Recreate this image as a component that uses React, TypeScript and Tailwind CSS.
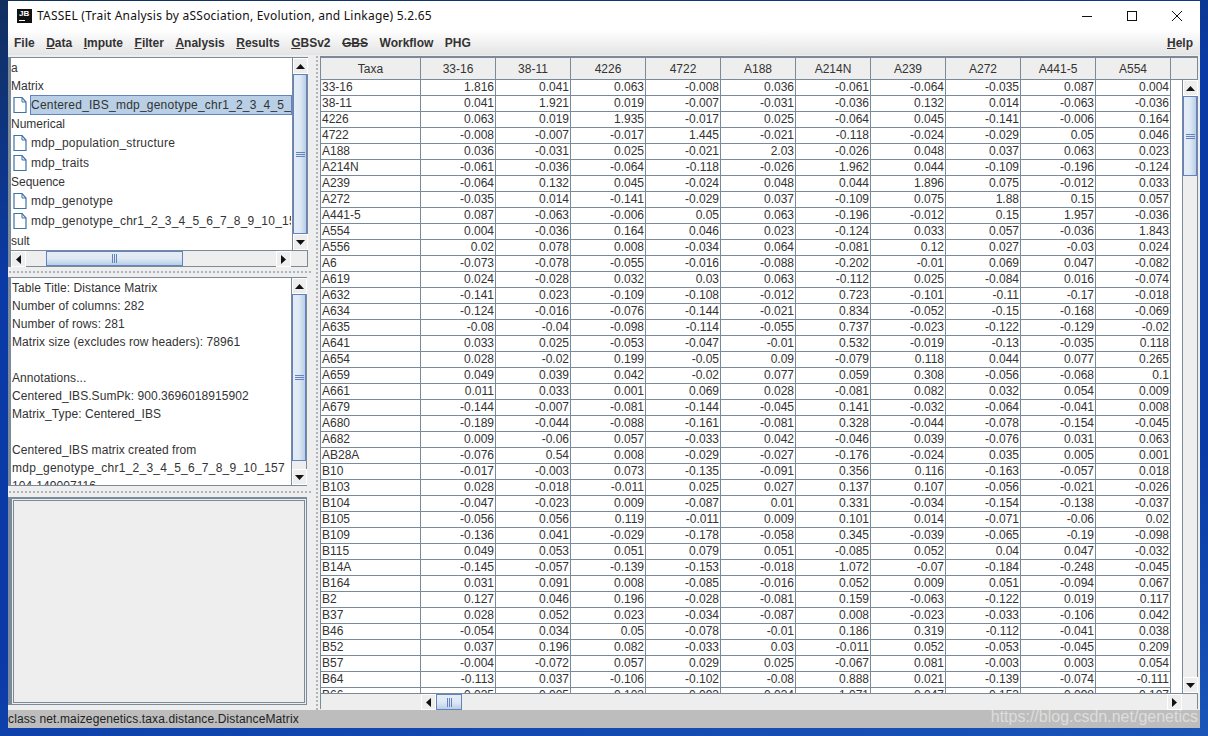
import React from 'react';

const columns = ['33-16', '38-11', '4226', '4722', 'A188', 'A214N', 'A239', 'A272', 'A441-5', 'A554'];

const rows: string[][] = [
  ['33-16', '1.816', '0.041', '0.063', '-0.008', '0.036', '-0.061', '-0.064', '-0.035', '0.087', '0.004'],
  ['38-11', '0.041', '1.921', '0.019', '-0.007', '-0.031', '-0.036', '0.132', '0.014', '-0.063', '-0.036'],
  ['4226', '0.063', '0.019', '1.935', '-0.017', '0.025', '-0.064', '0.045', '-0.141', '-0.006', '0.164'],
  ['4722', '-0.008', '-0.007', '-0.017', '1.445', '-0.021', '-0.118', '-0.024', '-0.029', '0.05', '0.046'],
  ['A188', '0.036', '-0.031', '0.025', '-0.021', '2.03', '-0.026', '0.048', '0.037', '0.063', '0.023'],
  ['A214N', '-0.061', '-0.036', '-0.064', '-0.118', '-0.026', '1.962', '0.044', '-0.109', '-0.196', '-0.124'],
  ['A239', '-0.064', '0.132', '0.045', '-0.024', '0.048', '0.044', '1.896', '0.075', '-0.012', '0.033'],
  ['A272', '-0.035', '0.014', '-0.141', '-0.029', '0.037', '-0.109', '0.075', '1.88', '0.15', '0.057'],
  ['A441-5', '0.087', '-0.063', '-0.006', '0.05', '0.063', '-0.196', '-0.012', '0.15', '1.957', '-0.036'],
  ['A554', '0.004', '-0.036', '0.164', '0.046', '0.023', '-0.124', '0.033', '0.057', '-0.036', '1.843'],
  ['A556', '0.02', '0.078', '0.008', '-0.034', '0.064', '-0.081', '0.12', '0.027', '-0.03', '0.024'],
  ['A6', '-0.073', '-0.078', '-0.055', '-0.016', '-0.088', '-0.202', '-0.01', '0.069', '0.047', '-0.082'],
  ['A619', '0.024', '-0.028', '0.032', '0.03', '0.063', '-0.112', '0.025', '-0.084', '0.016', '-0.074'],
  ['A632', '-0.141', '0.023', '-0.109', '-0.108', '-0.012', '0.723', '-0.101', '-0.11', '-0.17', '-0.018'],
  ['A634', '-0.124', '-0.016', '-0.076', '-0.144', '-0.021', '0.834', '-0.052', '-0.15', '-0.168', '-0.069'],
  ['A635', '-0.08', '-0.04', '-0.098', '-0.114', '-0.055', '0.737', '-0.023', '-0.122', '-0.129', '-0.02'],
  ['A641', '0.033', '0.025', '-0.053', '-0.047', '-0.01', '0.532', '-0.019', '-0.13', '-0.035', '0.118'],
  ['A654', '0.028', '-0.02', '0.199', '-0.05', '0.09', '-0.079', '0.118', '0.044', '0.077', '0.265'],
  ['A659', '0.049', '0.039', '0.042', '-0.02', '0.077', '0.059', '0.308', '-0.056', '-0.068', '0.1'],
  ['A661', '0.011', '0.033', '0.001', '0.069', '0.028', '-0.081', '0.082', '0.032', '0.054', '0.009'],
  ['A679', '-0.144', '-0.007', '-0.081', '-0.144', '-0.045', '0.141', '-0.032', '-0.064', '-0.041', '0.008'],
  ['A680', '-0.189', '-0.044', '-0.088', '-0.161', '-0.081', '0.328', '-0.044', '-0.078', '-0.154', '-0.045'],
  ['A682', '0.009', '-0.06', '0.057', '-0.033', '0.042', '-0.046', '0.039', '-0.076', '0.031', '0.063'],
  ['AB28A', '-0.076', '0.54', '0.008', '-0.029', '-0.027', '-0.176', '-0.024', '0.035', '0.005', '0.001'],
  ['B10', '-0.017', '-0.003', '0.073', '-0.135', '-0.091', '0.356', '0.116', '-0.163', '-0.057', '0.018'],
  ['B103', '0.028', '-0.018', '-0.011', '0.025', '0.027', '0.137', '0.107', '-0.056', '-0.021', '-0.026'],
  ['B104', '-0.047', '-0.023', '0.009', '-0.087', '0.01', '0.331', '-0.034', '-0.154', '-0.138', '-0.037'],
  ['B105', '-0.056', '0.056', '0.119', '-0.011', '0.009', '0.101', '0.014', '-0.071', '-0.06', '0.02'],
  ['B109', '-0.136', '0.041', '-0.029', '-0.178', '-0.058', '0.345', '-0.039', '-0.065', '-0.19', '-0.098'],
  ['B115', '0.049', '0.053', '0.051', '0.079', '0.051', '-0.085', '0.052', '0.04', '0.047', '-0.032'],
  ['B14A', '-0.145', '-0.057', '-0.139', '-0.153', '-0.018', '1.072', '-0.07', '-0.184', '-0.248', '-0.045'],
  ['B164', '0.031', '0.091', '0.008', '-0.085', '-0.016', '0.052', '0.009', '0.051', '-0.094', '0.067'],
  ['B2', '0.127', '0.046', '0.196', '-0.028', '-0.081', '0.159', '-0.063', '-0.122', '0.019', '0.117'],
  ['B37', '0.028', '0.052', '0.023', '-0.034', '-0.087', '0.008', '-0.023', '-0.033', '-0.106', '0.042'],
  ['B46', '-0.054', '0.034', '0.05', '-0.078', '-0.01', '0.186', '0.319', '-0.112', '-0.041', '0.038'],
  ['B52', '0.037', '0.196', '0.082', '-0.033', '0.03', '-0.011', '0.052', '-0.053', '-0.045', '0.209'],
  ['B57', '-0.004', '-0.072', '0.057', '0.029', '0.025', '-0.067', '0.081', '-0.003', '0.003', '0.054'],
  ['B64', '-0.113', '0.037', '-0.106', '-0.102', '-0.08', '0.888', '0.021', '-0.139', '-0.074', '-0.111'],
  ['B66', '-0.035', '0.005', '-0.103', '-0.093', '-0.034', '1.071', '0.047', '-0.153', '-0.098', '-0.107'],
];

const infoLines = [
  'Table Title: Distance Matrix',
  'Number of columns: 282',
  'Number of rows: 281',
  'Matrix size (excludes row headers): 78961',
  '',
  'Annotations...',
  'Centered_IBS.SumPk: 900.3696018915902',
  'Matrix_Type: Centered_IBS',
  '',
  'Centered_IBS matrix created from',
  'mdp_genotype_chr1_2_3_4_5_6_7_8_9_10_157',
  '104-149007116',
];

function Arrow({ dir }: { dir: 'up' | 'down' | 'left' | 'right' }) {
  const points = {
    up: '0,5 9,5 4.5,0',
    down: '0,0 9,0 4.5,5',
    left: '5,0 5,9 0,4.5',
    right: '0,0 0,9 5,4.5',
  }[dir];
  const vertical = dir === 'up' || dir === 'down';
  return (
    <svg width={vertical ? 9 : 5} height={vertical ? 5 : 9} className="block">
      <polygon points={points} fill="#111" />
    </svg>
  );
}

function ScrollButton({ dir }: { dir: 'up' | 'down' | 'left' | 'right' }) {
  return (
    <div className="w-[15px] h-[16px] shrink-0 flex items-center justify-center bg-[#eeeeee] border border-white">
      <Arrow dir={dir} />
    </div>
  );
}

function VScroll({ top, thumb, width = 'w-[15px]' }: { top: number; thumb: number; width?: string }) {
  return (
    <div className={`${width} shrink-0 flex flex-col bg-[#eeeeee] border-l border-[#7a8a99]`}>
      <ScrollButton dir="up" />
      <div className="flex-1 min-h-0">
        <div style={{ height: top }} />
        <div
          style={{ height: thumb }}
          className="border-y border-x border-[#6382bf] bg-gradient-to-r from-[#e4edf6] via-[#dfe9f5] to-[#b8cfe5] flex items-center justify-center"
        >
          <div className="w-[9px] h-[5px] border-y border-[#6382bf] flex items-center">
            <div className="w-full h-px bg-[#6382bf]" />
          </div>
        </div>
      </div>
      <ScrollButton dir="down" />
    </div>
  );
}

function HThumb({ width }: { width: number }) {
  return (
    <div
      style={{ width }}
      className="h-full shrink-0 border border-[#6382bf] bg-gradient-to-b from-[#e4edf6] via-[#dfe9f5] to-[#b8cfe5] flex items-center justify-center"
    >
      <div className="h-[9px] w-[5px] border-x border-[#6382bf] flex justify-center">
        <div className="h-full w-px bg-[#6382bf]" />
      </div>
    </div>
  );
}

function PageIcon() {
  return (
    <svg width="14" height="18" viewBox="0 0 14 18" className="block shrink-0">
      <path d="M1 1.5 H9 L13 6 V16.5 H1 Z" fill="#ffffff" stroke="#3f72a8" strokeWidth="1.2" />
      <path d="M9 1.5 V6 H13" fill="none" stroke="#3f72a8" strokeWidth="1" />
    </svg>
  );
}

function TreeCategory({ label, className = 'h-[18px] leading-[18px]' }: { label: string; className?: string }) {
  return <div className={`${className} whitespace-nowrap`}>{label}</div>;
}

function TreeItem({ label, selected }: { label: string; selected?: boolean }) {
  return (
    <div className="h-[20px] flex items-center pl-[2px]">
      <PageIcon />
      <div
        className={`ml-[3px] h-[20px] leading-[18px] flex-1 min-w-0 overflow-hidden whitespace-nowrap tracking-[0.22px] border ${
          selected ? 'bg-[#b8cfe5] border-[#6382bf]' : 'border-transparent'
        }`}
      >
        {label}
      </div>
    </div>
  );
}

function SplitDots({ className }: { className: string }) {
  return <div className={`${className} bg-[radial-gradient(#8a95a0_0.6px,transparent_0.9px)] bg-[length:4px_4px]`} />;
}

function MenuItem({ label, mnemonic, strike }: { label: string; mnemonic?: boolean; strike?: boolean }) {
  if (strike) return <span className="line-through">{label}</span>;
  if (!mnemonic) return <span>{label}</span>;
  return (
    <span>
      <span className="underline">{label[0]}</span>
      {label.slice(1)}
    </span>
  );
}

export default function App() {
  return (
    <div
      className="w-[1208px] h-[736px] overflow-hidden relative pt-px bg-[linear-gradient(170deg,#12305e_0%,#0a3aa6_30%,#0a3aa6_70%,#1a55b8_100%)] text-[12px] text-[#333333]"
      style={{ fontFamily: '"Liberation Sans", Arial, sans-serif' }}
    >
      <div className="ml-[8px] w-[1192px] h-[727px] flex flex-col bg-[#eeeeee]">
        {/* Title bar */}
        <div className="h-[29px] shrink-0 bg-white flex items-center text-[#111111]">
          <div className="ml-[9px] w-[15px] h-[14px] bg-[#111111] text-white relative shrink-0">
            <span className="absolute left-[2px] top-px text-[8px] leading-[8px] font-bold">JB</span>
            <span className="absolute left-[2px] bottom-[2px] w-[6px] h-px bg-white" />
          </div>
          <span
            className="ml-[5px] text-[12px] tracking-[0.23px] whitespace-nowrap"
            style={{ fontFamily: '"Noto Sans", sans-serif' }}
          >
            TASSEL (Trait Analysis by aSSociation, Evolution, and Linkage) 5.2.65
          </span>
          <div className="ml-auto flex items-center gap-[35px] mr-[18px]">
            <svg width="10" height="10" className="block"><path d="M0 5.5 H10" stroke="#111" strokeWidth="1" /></svg>
            <svg width="10" height="10" className="block"><rect x="0.5" y="0.5" width="9" height="9" fill="none" stroke="#111" /></svg>
            <svg width="10" height="10" className="block"><path d="M0 0 L10 10 M10 0 L0 10" stroke="#111" strokeWidth="1" /></svg>
          </div>
        </div>

        {/* Menu bar */}
        <div className="h-[25px] shrink-0 bg-gradient-to-b from-white to-[#e4e4e4] flex items-center pl-[6px] pr-[7px] font-bold gap-[11.5px] whitespace-nowrap">
          <MenuItem label="File" />
          <MenuItem label="Data" mnemonic />
          <MenuItem label="Impute" mnemonic />
          <MenuItem label="Filter" mnemonic />
          <MenuItem label="Analysis" mnemonic />
          <MenuItem label="Results" mnemonic />
          <MenuItem label="GBSv2" mnemonic />
          <MenuItem label="GBS" strike />
          <MenuItem label="Workflow" />
          <MenuItem label="PHG" />
          <span className="ml-auto">
            <MenuItem label="Help" mnemonic />
          </span>
        </div>

        {/* Main */}
        <div className="h-[655px] shrink-0 flex bg-[#eeeeee]">
          {/* Left column */}
          <div className="w-[305px] shrink-0 pt-[2px] flex flex-col">
            <div className="h-[210px] w-[300px] shrink-0 border border-l-[3px] border-[#7a8a99] flex flex-col">
              <div className="h-[192px] flex">
                <div className="flex-1 min-w-0 bg-white overflow-hidden">
                  <TreeCategory label="a" className="h-[18px] leading-[20px]" />
                  <TreeCategory label="Matrix" className="h-[19px] leading-[20px]" />
                  <TreeItem label="Centered_IBS_mdp_genotype_chr1_2_3_4_5_6_7_8_9_10" selected />
                  <TreeCategory label="Numerical" />
                  <TreeItem label="mdp_population_structure" />
                  <TreeItem label="mdp_traits" />
                  <TreeCategory label="Sequence" />
                  <TreeItem label="mdp_genotype" />
                  <TreeItem label="mdp_genotype_chr1_2_3_4_5_6_7_8_9_10_157" />
                  <TreeCategory label="sult" className="h-[18px] leading-[20px]" />
                </div>
                <VScroll top={0} thumb={160} />
              </div>
              <div className="h-[16px] flex border-t border-[#7a8a99] bg-[#eeeeee]">
                <ScrollButton dir="left" />
                <div className="w-[250px] flex">
                  <div className="w-[20px]" />
                  <HThumb width={137} />
                </div>
                <ScrollButton dir="right" />
              </div>
            </div>

            <div className="h-[10px] w-[305px] shrink-0 flex items-center">
              <SplitDots className="h-[4px] w-full" />
            </div>

            <div className="h-[209px] w-[299px] shrink-0 border border-l-[3px] border-[#7a8a99] flex">
              <div className="flex-1 min-w-0 bg-white overflow-hidden pl-px pt-px">
                {infoLines.map((line, i) => (
                  <div
                    key={i}
                    className={`h-[18px] leading-[18px] whitespace-nowrap ${
                      line.includes('chr1') ? 'tracking-[0.25px]' : 'tracking-[0.07px]'
                    }`}
                  >
                    {line}
                  </div>
                ))}
              </div>
              <VScroll top={0} thumb={167} />
            </div>

            <div className="h-[11px] w-[305px] shrink-0 flex items-center">
              <SplitDots className="h-[4px] w-full" />
            </div>

            <div className="h-[208px] w-[299px] shrink-0 border-t-2 border-r border-b border-l-[4px] border-[#7a8a99] p-px">
              <div className="w-full h-full bg-[#eeeeee] border border-[#7a8a99]" />
            </div>
          </div>

          {/* Splitter */}
          <div className="w-[7px] shrink-0 flex justify-center">
            <SplitDots className="w-[4px] h-full" />
          </div>

          {/* Table */}
          <div className="w-[878px] h-[653px] mt-px border border-t-2 border-[#7a8a99] flex flex-col">
            <div className="h-[22px] shrink-0 flex bg-[#eeeeee]">
              <div className="w-[100px] shrink-0 border-r border-b border-[#7a8a99] flex items-center justify-center">Taxa</div>
              {columns.map((c) => (
                <div key={c} className="w-[75px] shrink-0 border-r border-b border-[#7a8a99] flex items-center justify-center">
                  {c}
                </div>
              ))}
              <div className="flex-1 border-b border-[#7a8a99]" />
            </div>
            <div className="h-[613px] shrink-0 flex">
              <div className="w-[850px] shrink-0 bg-white overflow-hidden">
                {rows.map((row) => (
                  <div key={row[0]} className="h-[16px] flex border-b border-[#7a8a99] leading-[15px]">
                    {row.map((v, i) =>
                      i === 0 ? (
                        <div key={i} className="w-[100px] shrink-0 border-r border-[#7a8a99] pl-px">
                          {v}
                        </div>
                      ) : (
                        <div key={i} className="w-[75px] shrink-0 border-r border-[#7a8a99] pr-px text-right">
                          {v}
                        </div>
                      ),
                    )}
                  </div>
                ))}
              </div>
              <div className="flex-1 bg-white flex justify-end">
                <VScroll top={0} thumb={80} width="w-[15px]" />
              </div>
            </div>
            <div className="flex-1 flex bg-[#eeeeee] border-t border-[#7a8a99]">
              <div className="w-[100px] shrink-0" />
              <ScrollButton dir="left" />
              <div className="w-[731px] shrink-0">
                <HThumb width={26} />
              </div>
              <ScrollButton dir="right" />
            </div>
          </div>
        </div>

        {/* Status bar */}
        <div className="h-[18px] shrink-0 bg-[#bdbdbd] leading-[18px] whitespace-nowrap text-[#222222] tracking-[0.13px]">
          class net.maizegenetics.taxa.distance.DistanceMatrix
        </div>
      </div>

      {/* Watermark */}
      <div className="absolute right-[10px] top-[706px] text-[16px] leading-[22px] text-white/50 whitespace-nowrap">
        https://blog.csdn.net/genetics
      </div>
    </div>
  );
}
